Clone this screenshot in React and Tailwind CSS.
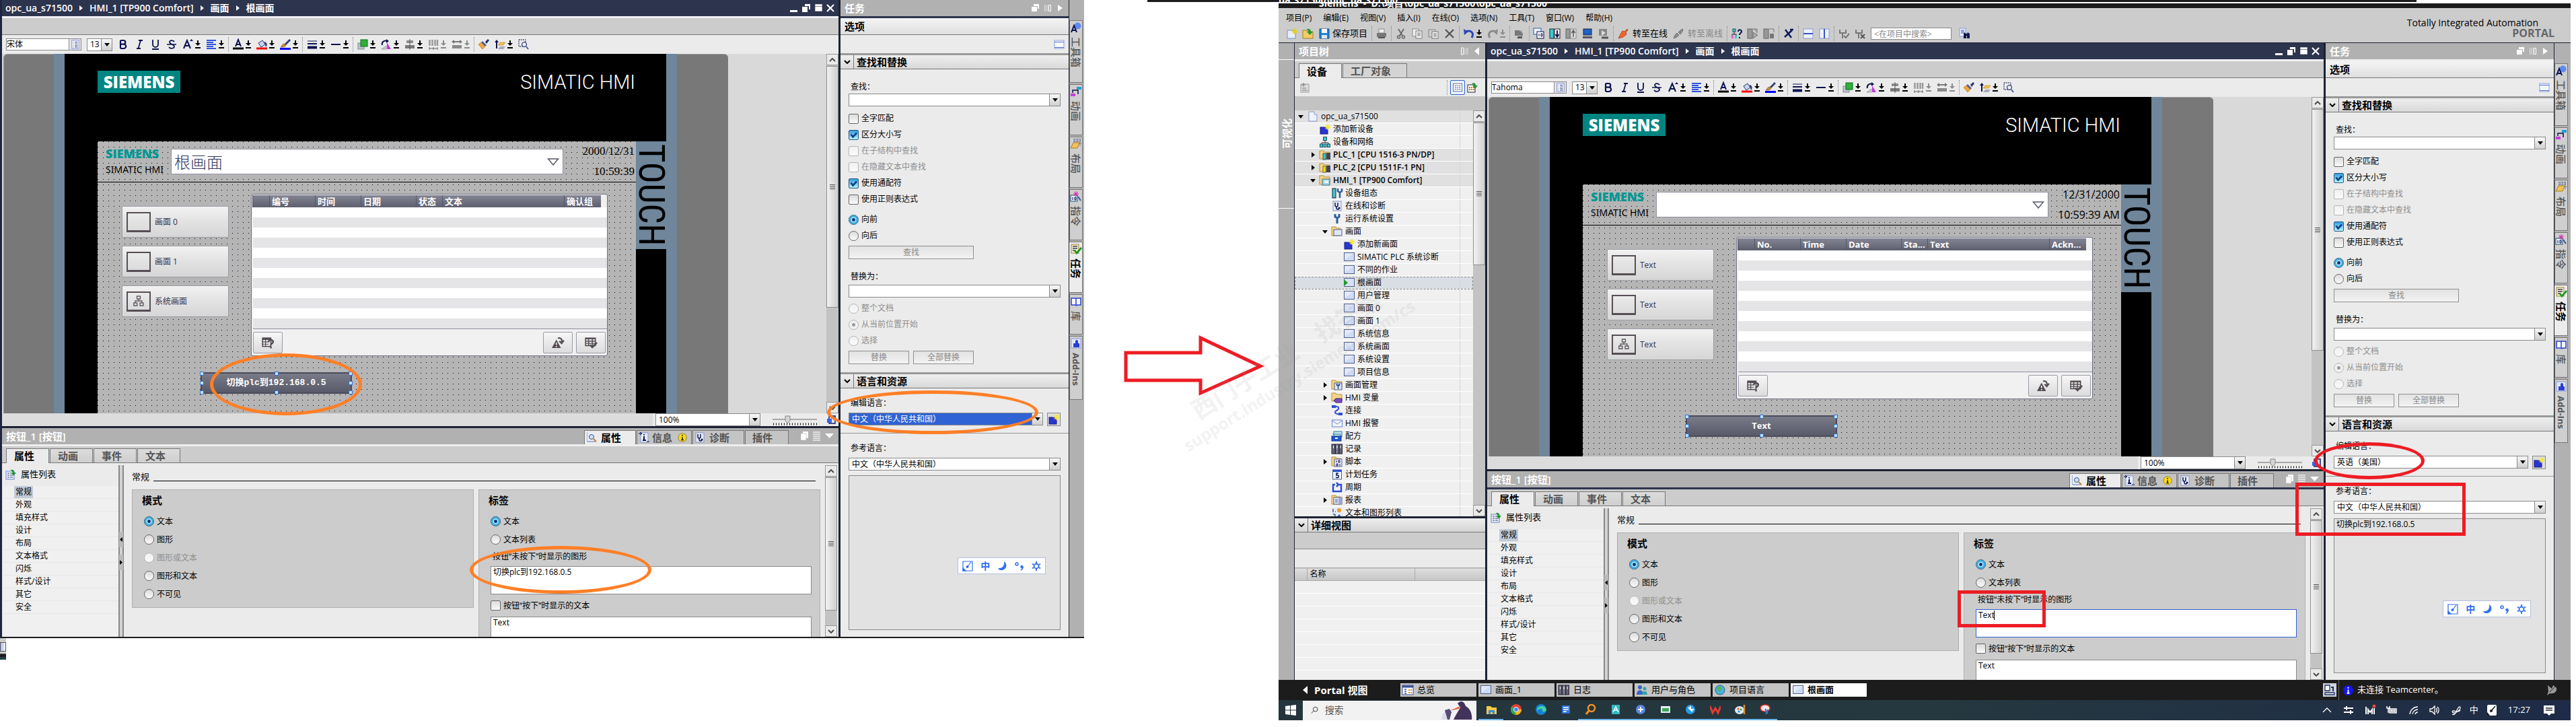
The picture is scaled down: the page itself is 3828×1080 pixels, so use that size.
import React from "react";

const ICONS = {
  list: <><rect x="2" y="1" width="12" height="14" fill="#fff" stroke="#6f7fd0" /><path d="M4 4h1M7 4h5M4 7h1M7 7h5M4 10h1M7 10h5M4 12.500h1M7 12.500h5" stroke="#10205c" /></>,
  bold: <path d="M4 2v12M4 2h4.500a2.800 2.800 0 010 5.700H4h5a3.100 3.100 0 010 6.300H4" fill="none" stroke="#0c1150" strokeWidth="2.200" />,
  italic: <path d="M7 2h6M4 14h6M10 2L6.500 14" fill="none" stroke="#0c1150" strokeWidth="1.800" />,
  under: <path d="M4 1v7a4 4 0 008 0V1M3 15h10" fill="none" stroke="#0c1150" strokeWidth="1.800" />,
  strike: <path d="M12 4c-1-2-7-3-7 .5S12 8 12 11s-6 4-8 1M1 8h14" fill="none" stroke="#0c1150" strokeWidth="1.700" />,
  fontUp: <><path d="M2 14L7 2l5 12M4 10h6" fill="none" stroke="#0c1150" strokeWidth="2" /><path d="M11 3h5l-2.500-3z" fill="#0c1150" /></>,
  align: <path d="M1 2h14M1 5h10M1 8h14M1 11h10M1 14h14" stroke="#3154dd" strokeWidth="2" />,
  fontColor: <><path d="M4 11L8 1l4 10M5 8h6" fill="none" stroke="#0c1150" strokeWidth="2" /><path d="M0 14h16" stroke="#000" strokeWidth="3" /></>,
  fill: <><path d="M3 6l6-4 4 6-6 4z" fill="#c9d4ee" stroke="#27336e" /><path d="M12 5c3 1 3 3 2 6" fill="none" stroke="#27336e" strokeWidth="2" /><path d="M0 14h16" stroke="#f00" strokeWidth="3" /></>,
  pen: <><path d="M14 0l2 2-7 7-2-2z" fill="#33406e" /><path d="M7 7l2 2c-1 3-5 3-8 3 2-1 2-5 6-5z" fill="#c58a35" stroke="#6b4717" strokeWidth=".6" /><path d="M0 14.500h16" stroke="#00f" strokeWidth="3" /></>,
  lines: <><path d="M1 3h14" stroke="#0c1150" /><path d="M1 7h14" stroke="#0c1150" strokeWidth="2" /><path d="M1 12.500h14" stroke="#0c1150" strokeWidth="4" /></>,
  line: <path d="M1 8h14" stroke="#0c1150" strokeWidth="2" />,
  green: <><rect x="1" y="6" width="9" height="9" fill="#b9c4cc" stroke="#7e8a92" /><rect x="5" y="1" width="10" height="10" fill="#2fae3c" stroke="#0f6d19" /></>,
  rotate: <><path d="M2 9a5 5 0 017-6" fill="none" stroke="#0c1150" strokeWidth="2" /><path d="M8 0l4 3-4 3z" fill="#0c1150" /><path d="M9 15V5l6 10z" fill="#c03be0" /><path d="M8 15H1l7-5z" fill="#cfd3df" stroke="#777" strokeWidth=".6" /></>,
  center: <><rect x="3" y="2" width="10" height="4" fill="#8e8e8e" /><rect x="1" y="9" width="14" height="5" fill="#7b7b7b" /><path d="M8 0v16" stroke="#555" /></>,
  distribute: <><path d="M2.500 1v9M6.500 1v9M10.500 1v9M14 1v9" stroke="#9a9a9a" strokeWidth="2.500" /><path d="M2 14h12M2 12v4M14 12v4M8 12v4" stroke="#666" /></>,
  sameWidth: <><rect x="1" y="9" width="14" height="5" fill="#8a8a8a" /><path d="M2 4h12" stroke="#777" strokeWidth="2" /><path d="M0 4l4-3v6zM16 4l-4-3v6z" fill="#777" /></>,
  brush: <><path d="M10 4l4-4 2 2-4 5z" fill="#27336e" /><path d="M6 3l6 6-2 2-6-6z" fill="#4c5ea8" /><path d="M4 5l6 6-4 4-6-7z" fill="#f0a63c" stroke="#a8680f" strokeWidth=".6" /></>,
  layer: <><path d="M3 14V3" stroke="#0c1150" strokeWidth="2" /><path d="M0 5l3-4 3 4z" fill="#0c1150" /><path d="M8 5h8l-3 4H5z" fill="#f2c15b" stroke="#b98213" strokeWidth=".6" /><path d="M8 11h8l-3 4H5z" fill="#aab" /></>,
  zoomSel: <><rect x="1" y="1" width="10" height="10" fill="none" stroke="#0c1150" strokeDasharray="2 1" /><circle cx="9" cy="8" r="3.500" fill="#e6eefb" stroke="#0c1150" /><path d="M12 11l3 4" stroke="#4a5fa8" strokeWidth="2" /></>,
  proj: <><path d="M2 1h8l4 4v10H2z" fill="#eef2fd" stroke="#8b95c6" /><path d="M10 1v4h4" fill="#fff" stroke="#8b95c6" /></>,
  add: <><rect x="1" y="5" width="11" height="10" fill="#2a36cf" stroke="#141c86" /><path d="M12 0v9M7.500 4.500h9M9 1.500l6 6M15 1.500l-6 6" stroke="#f5e83c" strokeWidth="1.500" /></>,
  net: <><path d="M8 5v4M3 12V9h10v3" fill="none" stroke="#223" /><rect x="5.500" y=".5" width="5" height="5" fill="#3bc9cd" stroke="#22505c" /><rect x=".5" y="11" width="4" height="4.500" fill="#3bc9cd" stroke="#22505c" /><rect x="6" y="11" width="4" height="4.500" fill="#3bc9cd" stroke="#22505c" /><rect x="11.500" y="11" width="4" height="4.500" fill="#3bc9cd" stroke="#22505c" /></>,
  plc: <><path d="M0 2h6l1 2h8v10H0z" fill="#f6d585" stroke="#bb9140" /><rect x="5" y="6" width="4" height="9" fill="#3bc9cd" stroke="#355" /><rect x="10" y="5" width="6" height="10" fill="#445" /></>,
  plcF: <><path d="M0 2h6l1 2h8v10H0z" fill="#f6d585" stroke="#bb9140" /><rect x="5" y="6" width="4" height="9" fill="#f5e21e" stroke="#664" /><rect x="10" y="5" width="6" height="10" fill="#445" /></>,
  hmi: <><path d="M0 1h6l1 2h8v11H0z" fill="#f6d585" stroke="#bb9140" /><rect x="4" y="6" width="11" height="9" fill="#9cd7de" stroke="#4c6d8a" /><rect x="7" y="8" width="6" height="4" fill="#eef" /></>,
  config: <><rect x="1" y="1" width="5" height="14" fill="#3bc9cd" stroke="#223" /><path d="M9 1v4l3 2 3-2V1M12 6v9" fill="none" stroke="#2f5d9a" strokeWidth="2.500" /></>,
  diag: <><rect x="2" y="1" width="12" height="14" fill="#e7edfb" stroke="#8b95c6" /><path d="M5 3v4a2 2 0 004 0V3M7 9v2a2 2 0 004 0" fill="none" stroke="#0c1150" strokeWidth="1.500" /><circle cx="11" cy="11" r="1.500" fill="#0c1150" /></>,
  wrench: <path d="M5 1v4l3 2 3-2V1M8 6v9" fill="none" stroke="#2f5d9a" strokeWidth="3" />,
  folderScr: <><path d="M0 1h6l1 2h6v11H0z" fill="#f6d585" stroke="#bb9140" /><rect x="3" y="5" width="12" height="9" fill="#dfe7f8" stroke="#50608a" /></>,
  screen: <><rect x=".5" y="1.500" width="15" height="12" fill="#cfdaf4" stroke="#50608a" /><path d="M1 2h14L1 12z" fill="#eef3fd" opacity=".6" /></>,
  start: <><rect x=".5" y="1.500" width="15" height="12" fill="#d8e1f5" stroke="#50608a" /><path d="M0 3l6 5-6 5z" fill="#1f9a2d" /></>,
  folderW: <><path d="M0 1h6l1 2h8v11H0z" fill="#f6d585" stroke="#bb9140" /><rect x="4" y="5" width="11" height="10" fill="#dfe7f8" stroke="#50608a" /><path d="M9.500 7v7M7.500 6v2.500h4V6" fill="none" stroke="#2b4b8c" strokeWidth="1.500" /></>,
  folderT: <><path d="M0 1h6l1 2h8v10H0z" fill="#f6d585" stroke="#bb9140" /><path d="M3 12l3-3h9v6H6z" fill="#7a4db8" stroke="#412179" /></>,
  conn: <><rect x="0" y="0" width="6" height="4" fill="#2d4fd2" /><rect x="10" y="11" width="6" height="4" fill="#2d4fd2" /><path d="M6 2c6 0 5 4 1 6s-2 5 3 5" fill="none" stroke="#2d4fd2" strokeWidth="2" /></>,
  mail: <><rect x=".5" y="3" width="15" height="10" fill="#f2f6ff" stroke="#6b86d6" /><path d="M1 4l7 5 7-5" fill="none" stroke="#6b86d6" /></>,
  recipe: <><path d="M3 1h12v8H3zM1 5h12v5" fill="#bfe8ee" stroke="#2f7a94" /><rect x="0" y="8" width="14" height="7" fill="#1f58d6" stroke="#0e2f85" /><path d="M5 11h4" stroke="#fff" strokeWidth="2" /></>,
  logs: <><rect x="0" y="1" width="5" height="14" fill="#667" stroke="#223" /><rect x="5.500" y="1" width="5" height="14" fill="#778" stroke="#223" /><rect x="11" y="1" width="4.500" height="14" fill="#667" stroke="#223" /><path d="M2.500 3v4M8 3v4M13 3v4" stroke="#fff" /></>,
  script: <><path d="M0 1h6l1 2h6v11H0z" fill="#f6d585" stroke="#bb9140" /><rect x="4" y="4" width="11" height="11" fill="#eef" stroke="#50608a" /><path d="M7 6v3M10 6h2v3h-2zM12 11v3M7 11h2v3H7z" stroke="#0c1150" fill="none" /></>,
  sched: <><rect x="1.500" y="1" width="13" height="14" fill="#eef3fd" stroke="#50608a" /><path d="M2 2.500h12" stroke="#2a4fd0" strokeWidth="3" /><path d="M10 6H7v3c3-1 4 1 3 3-1 1-2 1-4 0" fill="none" stroke="#0c1150" strokeWidth="1.500" /></>,
  cycle: <path d="M5 4H2v10h12V4h-4M7 1l3 3-3 3" fill="none" stroke="#2a4fd0" strokeWidth="2.500" />,
  report: <><path d="M0 1h6l1 2h6v11H0z" fill="#f6d585" stroke="#bb9140" /><rect x="3" y="4" width="12" height="10" fill="#eef" stroke="#50608a" /><path d="M5 7h4M5 9h4M5 11h4M11 5v8M13 5v8" stroke="#5060a8" /></>,
  textList: <><rect x="0" y="0" width="16" height="16" fill="#e3eafb" /><path d="M2 2v5M2 10h3v5M5 6h1" fill="none" stroke="#0c1150" /><circle cx="11" cy="4" r="3" fill="#f39a2d" /><path d="M7 15l4-5 4 5z" fill="#2a4fd0" /></>,
  new: <><rect x="1" y="3" width="12" height="12" fill="#e9effd" stroke="#7b8bc8" /><path d="M12 0v9M7.500 4.500h9M9 1.500l6 6M15 1.500l-6 6" stroke="#e6cf1d" strokeWidth="1.300" /></>,
  open: <><path d="M0 3h6l1 2h8v10H0z" fill="#f4cb65" stroke="#a87d20" /><path d="M6 1c4-1 6 1 6 4h3l-4.500 5L6 5h3" fill="#1f9a2d" /></>,
  save: <><path d="M1 1h14v14H1z" fill="#1d83d8" stroke="#0d4d8c" /><rect x="4" y="1" width="8" height="6" fill="#fff" /><rect x="4" y="10" width="8" height="5" fill="#dfe7f2" /></>,
  print: <><rect x="4" y="1" width="8" height="6" fill="#eee" stroke="#888" /><rect x="1" y="7" width="14" height="6" fill="#777" /><path d="M3 14h10" stroke="#555" strokeWidth="2" /></>,
  cut: <><path d="M4 1l6 10M12 1L6 11" stroke="#666" strokeWidth="1.800" /><circle cx="4.500" cy="13" r="2" fill="none" stroke="#666" strokeWidth="1.500" /><circle cx="11.500" cy="13" r="2" fill="none" stroke="#666" strokeWidth="1.500" /></>,
  copy: <><rect x="1" y="1" width="9" height="11" fill="#eee" stroke="#888" /><rect x="6" y="4" width="9" height="11" fill="#f5f5f5" stroke="#777" /><path d="M8 7h5M8 9h5M8 11h5" stroke="#777" /></>,
  paste: <><path d="M1 2h10v11H1z" fill="#ccc" stroke="#888" /><rect x="6" y="5" width="9" height="10" fill="#f5f5f5" stroke="#777" /><path d="M8 8h5M8 10h5M8 12h5" stroke="#777" /></>,
  del: <path d="M2 2l12 12M14 2L2 14" stroke="#555" strokeWidth="2.300" />,
  undo: <><path d="M3 5c8-3 13 2 9 9" fill="none" stroke="#2b44b8" strokeWidth="3" /><path d="M0 1l1 9 6-5z" fill="#2b44b8" /></>,
  redo: <><path d="M13 5C5 2 0 7 4 14" fill="none" stroke="#8b8b8b" strokeWidth="3" /><path d="M16 1l-1 9-6-5z" fill="#8b8b8b" /></>,
  compile: <><rect x="1" y="3" width="12" height="8" fill="#777" /><path d="M6 12h6v3H4z" fill="#555" /><path d="M12 0v8M8 4h8M9 1l6 6" stroke="#ccc" strokeWidth="1.200" /></>,
  load: <><rect x="0" y="0" width="11" height="9" fill="#eef3fd" stroke="#2f5d9a" /><rect x="5" y="5" width="10" height="10" fill="#fff" stroke="#0c1150" /><path d="M8 8v4M11 8h2v4h-2z" stroke="#0c1150" fill="none" /></>,
  down: <><rect x="0" y="1" width="6" height="14" fill="#3bc9cd" stroke="#223" /><rect x="7" y="1" width="8" height="14" fill="#f4f4f4" stroke="#223" /><path d="M11 3v9M8.500 9l2.500 4 2.500-4" stroke="#0c1150" fill="none" strokeWidth="1.800" /></>,
  up: <><rect x="0" y="1" width="6" height="14" fill="#999" stroke="#666" /><rect x="7" y="1" width="8" height="14" fill="#e4e4e4" stroke="#888" /><path d="M11 13V4M8.500 7L11 3l2.500 4" stroke="#666" fill="none" strokeWidth="1.800" /></>,
  pc: <><rect x="2" y="1" width="12" height="9" fill="#2060c8" stroke="#223" /><rect x="1" y="12" width="14" height="3" fill="#556" /></>,
  rt: <><rect x="1" y="1" width="12" height="10" fill="#888" /><path d="M5 3l6 4-6 4z" fill="#ddd" /><path d="M5 14h10" stroke="#555" strokeWidth="3" /></>,
  plug: <path d="M1 15l3-6 3-5 3 1 4-4 1 2-3 3 1 3-5 4z" fill="#f0642c" stroke="#a83a10" strokeWidth=".8" />,
  unplug: <path d="M1 15l2-5 3-3 3 3-3 3zM8 6l3-3 4-2-1 4-3 4z" fill="#8c8c8c" stroke="#666" strokeWidth=".8" />,
  help: <><path d="M4 5v4M1 12V9h6v3" fill="none" stroke="#223" /><rect x="2" y="1" width="4" height="4" fill="#3bc9cd" stroke="#22505c" /><rect x="0" y="11" width="3" height="4" fill="#f5c" /><rect x="5" y="11" width="3" height="4" fill="#3bc9cd" /><path d="M10 5c0-4 5-3 5 0 0 2-3 2-3 5M12 13v2" fill="none" stroke="#0c1150" strokeWidth="2" /></>,
  run: <><rect x="0" y="1" width="7" height="14" fill="#999" stroke="#666" /><path d="M8 1h6v6M8 6l7 4-7 5z" fill="#aaa" stroke="#777" /></>,
  stop: <><rect x="0" y="1" width="7" height="14" fill="#999" stroke="#666" /><rect x="9" y="8" width="6" height="7" fill="#777" /><path d="M8 1h7v5" fill="none" stroke="#777" /></>,
  cross: <path d="M3 2l9 12M13 3L2 13M10 2h5" stroke="#0c1b5c" strokeWidth="2.500" />,
  splitH: <><rect x="1" y="1" width="14" height="14" fill="#eef3fd" stroke="#8b9ad6" /><path d="M1 8h14" stroke="#3a55c8" strokeWidth="2" /></>,
  splitV: <><rect x="1" y="1" width="14" height="14" fill="#eef3fd" stroke="#8b9ad6" /><path d="M8 1v14" stroke="#3a55c8" strokeWidth="2" /></>,
  userOk: <><path d="M2 2v5h9V2M6 7v8" fill="none" stroke="#777" strokeWidth="2" /><path d="M8 11l3 3 5-6" fill="none" stroke="#777" strokeWidth="2" /></>,
  userNo: <><path d="M2 2v5h9V2M6 7v8" fill="none" stroke="#777" strokeWidth="2" /><path d="M9 9l6 6M15 9l-6 6" stroke="#555" strokeWidth="2" /></>,
  users: <><circle cx="5" cy="4" r="3" fill="#3a62c8" /><path d="M0 15c0-9 10-9 10 0z" fill="#3a62c8" /><circle cx="12" cy="6" r="2.500" fill="#2aa7a0" /><path d="M8 15c0-7 8-7 8 0z" fill="#2aa7a0" /></>,
  find: <><rect x="0" y="0" width="9" height="12" fill="#eef3fd" stroke="#8b9ad6" /><path d="M2 3h5M2 5h5M2 7h5" stroke="#3a55c8" /><path d="M6 15V8l2-2 1 2h2l1-2 3 2v7h-4v-4h-1v4z" fill="#10194f" /></>,
  window: <><rect x="1" y="2" width="14" height="12" fill="#f6f8ff" stroke="#8f9fdd" /><path d="M1 4.500h14M1 12.500h14" stroke="#5871d0" /></>,
  panel: <><path d="M1 3h12v12H1z" fill="#ddd" stroke="#999" /><path d="M5 1v6M2 4h6M3 9h6M3 12h8" stroke="#777" /></>,
  columns: <><rect x=".5" y="1.500" width="15" height="13" fill="#fff" stroke="#53628f" /><path d="M3 5h3M7 5h2M10 5h3M3 8h3M7 8h2M10 8h3M3 11h3M7 11h2M10 11h3" stroke="#33406e" /></>,
  export: <><rect x="0" y="4" width="11" height="11" fill="#fff" stroke="#223" /><path d="M2 8h2M5 8h2M8 8h2M2 11h2M5 11h2M8 11h2" stroke="#c72" strokeWidth="2" /><path d="M6 2c4-2 6 0 6 3h3l-4 5-4-5h3" fill="#1f9a2d" /></>,
  propList: <><rect x="0" y="3" width="12" height="12" fill="#eef3fd" stroke="#6b7fd0" /><path d="M2 6h3M6 6h4M2 9h3M6 9h4M2 12h3M6 12h4" stroke="#33406e" /><path d="M7 1c4-1 5 1 5 4h3l-4 5-3-5h2" fill="#1f9a2d" /></>,
  propTab: <><path d="M2 0v14h13" fill="none" stroke="#5f78cf" /><rect x="2" y="0" width="10" height="13" fill="#e7edfb" /><circle cx="8" cy="7" r="3.500" fill="#cfe0fa" stroke="#45506e" /><path d="M11 10l4 4" stroke="#c78324" strokeWidth="2" /></>,
  infoTab: <><rect x="3" y="1" width="11" height="14" fill="#e7edfb" stroke="#8b9ad6" /><path d="M8 6v6M6 12h5M8 3v1.500" stroke="#0c1150" strokeWidth="2" /><path d="M0 2h4M2 0l3 2-3 2M12 14h4" stroke="#0c1150" fill="none" /></>,
  info: <><circle cx="8" cy="8" r="7" fill="#fbd91a" stroke="#8f7a0b" /><path d="M8 7v5M6 12h4M8 3.500v2" stroke="#222" strokeWidth="1.800" /></>,
  infoBlue: <><circle cx="8" cy="8" r="8" fill="#1515ee" /><path d="M8 7v5.500M6 12.500h4M8 3v2" stroke="#fff" strokeWidth="2" /></>,
  tools: <><circle cx="10.500" cy="5.500" r="5" fill="#5d8af0" /><path d="M1 15L5 5l4 10M2.500 12h5" fill="none" stroke="#0c1150" strokeWidth="2" /></>,
  anim: <><rect x="0" y="11" width="7" height="4" fill="#c83be0" /><rect x="9" y="1" width="7" height="4" fill="#239dd0" /><path d="M3 10V6h8v6" fill="none" stroke="#0c1150" strokeWidth="1.500" /></>,
  layout: <><path d="M4 1h12M4 4h12M9 7h7M6 0v5M10 0v8M14 0v12" stroke="#33406e" strokeDasharray="1 1" /><path d="M4 6h9l-3 8H0z" fill="#f2c15b" stroke="#a87d20" /></>,
  instr: <><rect x="0" y="6" width="10" height="9" fill="#e7edfb" stroke="#22506c" /><path d="M3 9v4M6 9h2v4H6z" stroke="#0c1150" fill="none" /><path d="M8 0v8M4 4h8M5 1l6 6M11 1L5 7" stroke="#d21fae" /><path d="M11 8l4 6" stroke="#2f5d9a" strokeWidth="2" /></>,
  task: <><rect x="1" y="1" width="11" height="13" fill="#f7ecc2" stroke="#9a8431" /><path d="M3 4h7M3 7h7M3 10h4" stroke="#33406e" strokeWidth="1.500" /><path d="M6 10l3 4 7-8" fill="none" stroke="#1f9a2d" strokeWidth="2.800" /></>,
  lib: <path d="M8 3v11M8 3H1v10h7l1 1 1-1h5V3z" fill="#f6f8ff" stroke="#2a3fd0" strokeWidth="1.500" />,
  addin: <><rect x="1" y="1" width="14" height="14" fill="#dfe7fa" stroke="#8b9ad6" /><path d="M4 8h3V5a2 2 0 114 0v3h2v6H4z" fill="#2a3fd0" /></>,
  overview: <><rect x="0" y="1" width="16" height="14" fill="#fff" stroke="#334c90" /><path d="M0 3h16" stroke="#334c90" strokeWidth="3" /><path d="M3 7h3M3 10h3M3 13h3" stroke="#334c90" strokeWidth="1.500" /><path d="M9 8h2M12 8h2M9 12h2M12 12h2" stroke="#d9861f" strokeWidth="2" /></>,
  globe: <><circle cx="8" cy="8" r="7" fill="#4cb2d8" stroke="#1f5f96" /><path d="M3 5l5-3 3 4-4 5z" fill="#57b357" /></>,
  sysGray: <path d="M8 5v3M3 11V8h10v3M5.500 1h5v4h-5zM.8 11h5v4h-5zM10 11h5v4h-5z" fill="none" stroke="#605a60" strokeWidth="1.300" />,
  tblQ: <><rect x="1" y="2" width="11" height="11" fill="none" stroke="#544d53" strokeWidth="1.400" /><path d="M1 3h11" stroke="#544d53" strokeWidth="3" /><path d="M1 7h9M1 10h8M5 4v9" stroke="#544d53" /><path d="M9 7c0-4 6-3 6 0 0 2-3 2-3 4M12 13v2.500" fill="none" stroke="#544d53" strokeWidth="2.200" /></>,
  warn: <><path d="M6 4l6 11H0z" fill="#544d53" /><path d="M6 8v3M6 12.500V14" stroke="#eee" strokeWidth="1.500" /><path d="M8 2c4-1 6 2 5 5M10 6l3 3 3-4" fill="none" stroke="#544d53" strokeWidth="2" /></>,
  tblOk: <><rect x="1" y="2" width="13" height="10" fill="none" stroke="#544d53" strokeWidth="1.400" /><path d="M1 3h13M1 6h13M1 9h12M5 2v10M10 2v10" stroke="#544d53" strokeWidth="1.300" /><path d="M7 11l3 3 6-6" fill="none" stroke="#544d53" strokeWidth="2.500" /></>,
};

function Ic({ n, c = "size-4" }) {
  return <svg viewBox="0 0 16 16" aria-hidden="true" className={"shrink-0 overflow-visible " + c}>{ICONS[n]}</svg>;
}

function Drop({ gray }) {
  const col = gray ? "#8b8b8b" : "#000";
  return (
    <svg viewBox="0 0 8 12" aria-hidden="true" className="h-3 w-2 shrink-0">
      <path d="M4 0v4M0 11h8" stroke={col} strokeWidth="2" />
      <path d="M0 4h8L4 8z" fill={col} />
    </svg>
  );
}

function Tool({ n, drop, gray }) {
  return (
    <button type="button" aria-label={n} className="flex shrink-0 items-center gap-[3px]">
      <Ic n={n} />
      {drop && <Drop gray={gray} />}
    </button>
  );
}

const Sep = () => <span className="-mx-0.5 h-[22px] w-px shrink-0 border-l border-dotted border-[#888]" />;

function Combo({ label, value, className, selected }) {
  return (
    <span className={"relative flex h-[19px] border border-[#8a8a8a] bg-white " + className}>
      <select
        aria-label={label}
        defaultValue={value}
        className={"w-full appearance-none px-1 text-xs leading-4 outline-none " + (selected ? "bg-[#3063d4] text-white" : "bg-white text-black")}
      >
        <option>{value}</option>
      </select>
      <span className="pointer-events-none absolute inset-y-0 right-0 flex w-4 items-center justify-center border-l border-[#8a8a8a] bg-gradient-to-b from-[#f8f8f8] to-[#cfcfcf]">
        <svg viewBox="0 0 8 5" aria-hidden="true" className="h-[5px] w-2"><path d="M0 0h8L4 5z" /></svg>
      </span>
    </span>
  );
}

function Tick({ type = "checkbox", name, label, checked, disabled, h = "h-6" }) {
  const base = "size-[15px] shrink-0 appearance-none border bg-gradient-to-b from-[#dcdcdc] to-[#fafafa] disabled:border-[#b5b5b5] disabled:from-[#f1f1f1] ";
  const look = type === "radio"
    ? "rounded-full border-[#666] enabled:checked:border-[#2c5a7c] enabled:checked:bg-[radial-gradient(circle,#083a7c_0_2px,#cdeefb_3px,#2fa5dd_5px,#5fd6f5_7px)] disabled:checked:bg-[radial-gradient(circle,#999_0_2px,#f1f1f1_3px)]"
    : "rounded-[2px] border-[#666] checked:border-[#2c5a7c] checked:from-[#2f9be0] checked:to-[#b5f2fb]";
  return (
    <label className={"flex items-center gap-1 text-xs " + h + " " + (disabled ? "text-[#8f8f8f]" : "text-black")}>
      <span className="relative flex">
        <input type={type} name={name} defaultChecked={checked} disabled={disabled} className={base + look} />
        {type === "checkbox" && checked && (
          <svg viewBox="0 0 15 15" aria-hidden="true" className="pointer-events-none absolute inset-0 size-[15px]">
            <path d="M3.500 6.500l3 4 5.500-6" fill="none" stroke="#0c3f86" strokeWidth="2.600" />
          </svg>
        )}
      </span>
      {label}
    </label>
  );
}

function ScrollBtn({ dir }) {
  return (
    <button type="button" aria-label={dir} className="flex h-[17px] shrink-0 items-center justify-center border border-[#999] bg-[#e9e9e9]">
      <svg viewBox="0 0 10 6" className="h-1.5 w-2.5"><path d={dir === "up" ? "M1 5l4-4 4 4" : "M1 1l4 4 4-4"} fill="none" stroke="#4a4a4a" strokeWidth="2" /></svg>
    </button>
  );
}

function Scroll({ thumb, className = "" }) {
  return (
    <div className={"flex w-[18px] shrink-0 flex-col bg-[#c3c3c3] " + className}>
      <ScrollBtn dir="up" />
      <div className={"my-px flex items-center justify-center border border-[#8d8d8d] bg-gradient-to-r from-[#f2f2f2] to-[#cfcfcf] " + thumb}>
        <svg viewBox="0 0 8 8" className="size-2"><path d="M0 .5h8M0 3h8M0 5.500h8M0 8h8" stroke="#555" /></svg>
      </div>
      <div className="flex-1" />
      <ScrollBtn dir="down" />
    </div>
  );
}

const Crumb = () => <svg viewBox="0 0 5 8" aria-hidden="true" className="h-2 w-[5px]"><path d="M0 0l5 4-5 4z" fill="#fff" /></svg>;

function EditorTitle() {
  return (
    <div className="flex h-6 items-center gap-2.5 bg-[#2d344d] pr-1.5 pl-[5px] text-sm font-semibold text-white">
      <span>opc_ua_s71500</span><Crumb /><span>HMI_1 [TP900 Comfort]</span><Crumb /><span className="font-bold">画面</span><Crumb /><span className="font-bold">根画面</span>
      <svg viewBox="0 0 66 12" aria-label="window controls" className="ml-auto h-3 w-[66px]">
        <path d="M0 10.500h11" stroke="#fff" strokeWidth="3" />
        <path d="M22 0h8v8h-2V3h-6zM18 4h8v8h-8z" fill="#fff" />
        <path d="M37 0h11v11H37zM37 3.500h11" fill="#fff" stroke="#2d344d" strokeWidth=".6" />
        <path d="M55 1l10 10M65 1L55 11" stroke="#fff" strokeWidth="2.200" />
      </svg>
    </div>
  );
}

function EditorToolbar({ font }) {
  return (
    <div className="flex h-7 items-center gap-2 bg-[#ebebeb] pl-1.5">
      <span className="flex h-[18px] w-28 shrink-0 border border-[#8a8a8a] bg-white">
        <input aria-label="font" defaultValue={font} className="w-full min-w-0 text-xs outline-none" />
        <span className="flex w-[18px] shrink-0 items-center justify-center border-l border-[#8a8a8a] bg-[#e4e4ee]"><Ic n="list" c="size-3.5" /></span>
      </span>
      <Combo label="font size" value="13" className="w-[38px] shrink-0" />
      <span className="flex shrink-0 items-center gap-2"><Tool n="bold" /><Tool n="italic" /><Tool n="under" /><Tool n="strike" /></span>
      <Tool n="fontUp" drop /><Tool n="align" drop /><Sep />
      <Tool n="fontColor" drop /><Tool n="fill" drop /><Tool n="pen" drop /><Sep />
      <Tool n="lines" drop /><Tool n="line" drop /><Sep />
      <Tool n="green" drop /><Tool n="rotate" drop /><Tool n="center" drop /><Tool n="distribute" drop gray /><Tool n="sameWidth" drop gray /><Sep />
      <Tool n="brush" /><Tool n="layer" drop /><Tool n="zoomSel" />
    </div>
  );
}

const COLS = ["w-[25px]", "w-[68px]", "w-[68px]", "w-[82px]", "w-[39px]", "w-[181px]", "w-[54px]", "w-[9px]"];

function AlarmTable({ heads }) {
  return (
    <div className="absolute top-[78px] left-[228px] w-[530px] rounded-[3px] border border-[#6f7286] bg-[#f1f1f1] p-px">
      <table className="w-[526px] table-fixed border-collapse border-b border-[#8d8f9d]">
        <colgroup>{COLS.map((c, i) => <col key={i} className={c} />)}</colgroup>
        <thead>
          <tr className="h-[18px]">
            {["", ...heads].map((h, i) => (
              <th key={i} className="overflow-hidden border-l border-[#565768] bg-gradient-to-b from-[#858694] to-[#5e5f6e] p-0 pl-[3px] text-left text-[13px] leading-4 font-bold whitespace-nowrap text-white">{h}</th>
            ))}
            <th className="p-0" />
          </tr>
        </thead>
        <tbody>
          {Array.from({ length: 12 }, (_, i) => (
            <tr key={i} className="h-[15px] odd:bg-white even:bg-[#e5e5e7]"><td colSpan={8} className="p-0" /></tr>
          ))}
        </tbody>
      </table>
      <div className="flex gap-[5px] px-px pt-1 pb-0.5">
        {["tblQ", "warn", "tblOk"].map((n) => (
          <button key={n} type="button" aria-label={n} className="flex h-8 w-11 items-center justify-center rounded-[2px] border border-[#9a9aa6] bg-gradient-to-b from-[#f6f6f6] to-[#dcdcde] first:mr-auto"><Ic n={n} c="size-[18px]" /></button>
        ))}
      </div>
    </div>
  );
}

const HANDLES = ["top-0 left-0", "top-0 left-1/2", "top-0 left-full", "top-1/2 left-0", "top-1/2 left-full", "top-full left-0", "top-full left-1/2", "top-full left-full"];

function HmiScreen({ t }) {
  return (
    <div className="flex h-[534px] overflow-hidden bg-[#d9d9d9]">
      <div className="ml-0.5 w-[75px] shrink-0 rounded-tl-md border-t border-l border-[#999] bg-[#787878]" />
      <div className="w-4 shrink-0 bg-[#6f869b]" />
      <div className="w-[49px] shrink-0 bg-black" />
      <div className="w-[800px] shrink-0">
        <div className="flex h-[130px] items-start justify-between bg-black pt-[25px] pr-px">
          <div className="flex h-[33px] w-[123px] items-center justify-center bg-[#008582] font-['Open_Sans'] text-2xl leading-8 font-extrabold text-white">SIEMENS</div>
          <div className="font-['Roboto','Liberation_Sans'] text-[29px] leading-[34px] font-light text-white">SIMATIC HMI</div>
        </div>
        <div className="relative h-[404px] bg-[#b5b5b5] bg-[radial-gradient(circle_at_0.5px_0.5px,#000_0.6px,transparent_0.7px)] bg-size-[8px_8px]">
          <div className="flex h-[61px] items-center justify-between border-b border-black pr-0.5 pl-3">
            <div className="w-[97px]">
              <div className="font-['Open_Sans'] text-lg leading-6 font-extrabold text-[#009894]">SIEMENS</div>
              <div className="font-['Noto_Sans'] text-sm leading-6 text-black">SIMATIC HMI</div>
            </div>
            <div className="mr-auto flex h-[38px] w-[583px] items-center justify-between border border-[#9092a0] bg-white pr-[5px] pl-1 font-['Noto_Sans_CJK_SC'] text-2xl font-light text-[#31345a]">
              <span>{t.title}</span>
              <svg viewBox="0 0 18 11" aria-hidden="true" className="h-[11px] w-[18px]"><path d="M1.500 1h15L9 10z" fill="none" stroke="#555767" strokeWidth="1.500" /></svg>
            </div>
            <div className={"text-right whitespace-nowrap text-black " + t.clock}><div>{t.date}</div><div>{t.time}</div></div>
          </div>
          <div className="absolute top-24 left-9 flex w-[159px] flex-col gap-3">
            {t.buttons.map((b, i) => (
              <button key={i} type="button" className="flex h-[47px] items-center gap-1.5 rounded-[2px] border border-[#9c9ca8] bg-gradient-to-b from-[#f2f2f2] via-[#e2e2e2] to-[#d6d6d6] pl-1.5 text-xs text-[#31334e]">
                <span className="flex h-[30px] w-9 items-center justify-center border-2 border-b-[3px] border-[#564e54]">{i === 2 && <Ic n="sysGray" />}</span>
                {b}
              </button>
            ))}
          </div>
          <AlarmTable heads={t.heads} />
          <div className="absolute top-[343px] left-[153px] flex h-8 w-[225px] items-center justify-center border-2 border-[#4a4b5a] bg-gradient-to-b from-[#7a7b89] to-[#595a69] text-[13px] font-bold text-white">
            <span className={t.btnFont}>{t.btn}</span>
            <div className="absolute inset-0">
              {HANDLES.map((h) => <i key={h} className={"absolute size-1.5 -translate-x-1/2 -translate-y-1/2 border border-[#3f6fd0] bg-[#b9e3fb] " + h} />)}
            </div>
          </div>
        </div>
      </div>
      <div className="w-[45px] shrink-0 bg-black pt-[130px]">
        <div className="flex h-40 items-center justify-center bg-[#6f869b] font-['Liberation_Sans_Narrow','Roboto_Condensed','Liberation_Sans'] text-[53px] leading-[45px] text-black [writing-mode:vertical-rl] [text-orientation:sideways]">TOUCH</div>
      </div>
      <div className="w-4 shrink-0 bg-[#6f869b]" />
      <div className="w-[76px] shrink-0 rounded-tr-md border-t border-[#999] bg-[#787878]" />
      <div className="flex-1" />
      <Scroll thumb="h-[359px]" />
    </div>
  );
}

function StatusStrip() {
  return (
    <div className="flex h-[19px] items-center justify-end bg-[#dcdcdc]">
      <div className="flex h-full w-[276px] items-center bg-[#ebebeb] pl-1">
        <Combo label="zoom" value="100%" className="w-[156px]" />
        <svg viewBox="0 0 66 16" aria-hidden="true" className="ml-[18px] h-4 w-[66px]">
          <path d="M0 7h66" stroke="#666" />
          <path d="M1 14h65" stroke="#111" strokeWidth="3" strokeDasharray="1 3" />
          <path d="M19 2h7v7l-3.500 4L19 9z" fill="#d5d5d5" stroke="#888" />
        </svg>
        <svg viewBox="0 0 14 14" aria-hidden="true" className="mr-1 ml-auto size-3.5"><path d="M4 1h9v11H4z" fill="#dfe6fb" stroke="#10206c" strokeWidth="1.500" /><path d="M1 5h7v6H1z" fill="#3a62e8" /></svg>
      </div>
    </div>
  );
}

const PROP_ITEMS = ["常规", "外观", "填充样式", "设计", "布局", "文本格式", "闪烁", "样式/设计", "其它", "安全"];

function PropsPanel({ id, text, caret }) {
  const tab = "flex h-[21px] items-center border border-b-0 border-[#777] text-[15px] font-bold ";
  return (
    <div>
      <div className="flex h-6 items-end bg-[#b1b1b1] pl-1.5 text-[15px] font-semibold text-white">
        <span className="self-center">按钮_1 [按钮]</span>
        <div className="ml-auto flex gap-px">
          <button type="button" className={tab + "w-[77px] gap-1.5 bg-[#ececec] pl-0.5 text-black"}><Ic n="propTab" />属性</button>
          <button type="button" className={tab + "w-[82px] gap-1 bg-[#c4c4c4] pl-0.5 text-[#555]"}><Ic n="infoTab" />信息<Ic n="info" c="ml-1 size-3.5" /></button>
          <button type="button" className={tab + "w-[77px] gap-1.5 bg-[#c4c4c4] pl-0.5 text-[#555]"}><Ic n="diag" />诊断</button>
          <button type="button" className={tab + "w-[65px] bg-[#c4c4c4] pl-2.5 text-[#555]"}>插件</button>
        </div>
        <svg viewBox="0 0 52 14" aria-hidden="true" className="mr-1 ml-[18px] h-3.5 w-[52px] self-center">
          <path d="M3 0h8v10H3z" fill="#fff" /><path d="M0 3h8v10H0z" fill="#fff" stroke="#b1b1b1" strokeWidth=".6" />
          <path d="M18 1h11M18 4h11M18 7h11M18 10h11M18 13h11" stroke="#eee" strokeWidth="1.500" />
          <path d="M36 3h13l-6.500 7z" fill="#fff" />
        </svg>
      </div>
      <div className={"h-[3px] " + (caret ? "bg-[#2d344d]" : "bg-[#eee]")} />
      <div className="flex h-[25px] items-end gap-px border-b border-[#777] bg-[#ccc] pl-1.5">
        {["属性", "动画", "事件", "文本"].map((n, i) => (
          <button key={n} type="button" className={tab + "w-16 pl-[11px] " + (i === 0 ? "-mb-px h-[22px] bg-[#ececec] text-black" : "bg-gradient-to-b from-[#dcdcdc] to-[#cfcfcf] text-[#555]")}>{n}</button>
        ))}
      </div>
      <div className="flex h-[258px] overflow-hidden bg-[#ebebeb] text-xs text-black">
        <div className="ml-0.5 w-[171px] shrink-0">
          <div className="flex h-[34px] items-center gap-1.5 pl-1 text-[13px]"><Ic n="propList" />属性列表</div>
          <ul className="h-full bg-[#f0f0f0]">
            {PROP_ITEMS.map((n, i) => (
              <li key={n} className="flex h-[19px] items-center border-b border-[#e6e6e6] pl-4"><a href="#" className={"px-0.5 leading-[18px] " + (i === 0 ? "bg-[#c0cbd9]" : "")}>{n}</a></li>
            ))}
          </ul>
        </div>
        <div className="mt-[3px] flex w-2 shrink-0 flex-col items-center justify-center gap-[11px] border-x-2 border-[#888] bg-[#d2d2d2]">
          <svg viewBox="0 0 6 23" className="h-[23px] w-1.5"><path d="M0 0h6v23H0z" fill="#bbb" /><path d="M5 8v7L1 11.500z" /></svg>
          <svg viewBox="0 0 6 23" className="h-[23px] w-1.5"><path d="M0 0h6v23H0z" fill="#bbb" /><path d="M1 8v7l4-3.500z" /></svg>
        </div>
        <div className="min-w-0 flex-1 pt-3 pl-3">
          <div className="flex h-[17px] items-end gap-1.5 pr-[14px] text-[13px] leading-[18px]">常规<span className="mb-0.5 h-px flex-1 bg-black" /></div>
          <div className="mt-[10px] grid grid-cols-2 items-start gap-[7px] pr-[7px]">
            <fieldset className="h-[176px] min-w-0 border border-[#b0b0b0] bg-[#ccc] pl-[17px]">
              <div className="-ml-[3px] flex h-[33px] items-center pb-1 text-[15px] font-bold">模式</div>
              {["文本", "图形", "图形或文本", "图形和文本", "不可见"].map((n, i) => (
                <Tick key={n} type="radio" name={id + "-mode"} label={n} checked={i === 0} disabled={i === 2} h="h-[27px]" />
              ))}
            </fieldset>
            <fieldset className="h-[260px] min-w-0 border border-[#b0b0b0] bg-[#ccc] pr-3 pl-[17px]">
              <div className="-ml-[3px] flex h-[33px] items-center pb-1 text-[15px] font-bold">标签</div>
              <Tick type="radio" name={id + "-label"} label="文本" checked h="h-[27px]" />
              <Tick type="radio" name={id + "-label"} label="文本列表" h="h-[27px]" />
              <label htmlFor={id + "-off"} className="block h-[26px] pl-[3px] leading-6">按钮“未按下”时显示的图形</label>
              <div className="relative flex">
                <textarea id={id + "-off"} defaultValue={text} className={"h-[42px] w-full resize-none border bg-white px-[3px] text-xs leading-4 outline-none " + (caret ? "border-[#3063d4]" : "border-[#8a8a8a]")} />
                {caret && <span className="absolute top-0.5 left-[27px] h-3.5 w-px bg-black" />}
              </div>
              <Tick label="按钮“按下”时显示的文本" h="h-[33px]" />
              <textarea aria-label="text when pressed" defaultValue="Text" className="block h-[42px] w-full resize-none border border-[#8a8a8a] bg-white px-[3px] text-xs leading-4 outline-none" />
            </fieldset>
          </div>
        </div>
        <Scroll thumb="h-[198px]" className="mt-[3px] mr-0.5" />
      </div>
    </div>
  );
}

function Editor({ t, id }) {
  return (
    <section className="min-w-0 flex-1">
      <EditorTitle />
      <div className="h-[3px] bg-[#f0f0f4]" />
      <div className="h-[25px] border-b border-[#777] bg-[#ccc]" />
      <EditorToolbar font={t.font} />
      <HmiScreen t={t} />
      <StatusStrip />
      <div className="h-[3px] bg-[#1d2232]" />
      <PropsPanel id={id} text={t.btn} caret={t.caret} />
    </section>
  );
}

function SectionHead({ children }) {
  return (
    <div className="flex h-6 items-stretch border-t-[3px] border-b border-t-[#999] border-b-[#777] bg-gradient-to-b from-[#eee] to-[#d9d9d9] text-[15px] leading-5 font-bold text-black">
      <span className="mr-1 flex w-5 items-center justify-center border-r border-[#777]">
        <svg viewBox="0 0 10 6" aria-hidden="true" className="h-1.5 w-2.5"><path d="M1 1l4 4 4-4" fill="none" stroke="#000" strokeWidth="2" /></svg>
      </span>
      {children}
    </div>
  );
}

function PushBtn({ children, w }) {
  return <button type="button" disabled className={"h-5 border border-[#8f8f8f] bg-gradient-to-b from-[#e2e2e2] to-[#f3f3f3] text-xs text-[#8a8a8a] " + w}>{children}</button>;
}

function ImeBar() {
  return (
    <div className="absolute right-[34px] bottom-[93px] flex h-[25px] w-[131px] items-center justify-between border border-[#b4bfdc] bg-white px-1.5 text-sm font-bold text-[#2d6ff0]">
      <svg viewBox="0 0 16 16" className="size-4"><path d="M1 1h14v14H1z" fill="#fff" stroke="#2d6ff0" strokeWidth="1.200" /><path d="M1 11l4 4H1zM7 10l6-8" fill="#2d6ff0" stroke="#2d6ff0" strokeWidth="1.200" /><circle cx="7.500" cy="9" r="2" fill="#2d6ff0" /></svg>
      <span>中</span>
      <svg viewBox="0 0 14 14" className="size-3.5"><path d="M9 0c7 5 2 14-5 13-2 0-3-1-4-3 7 1 10-4 9-10z" fill="#2d6ff0" /></svg>
      <svg viewBox="0 0 14 14" className="size-3.5"><circle cx="3" cy="4" r="2" fill="none" stroke="#2d6ff0" strokeWidth="1.500" /><circle cx="10.500" cy="8" r="2.200" fill="#2d6ff0" /><path d="M12 8c0 2-1 4-3 5" fill="none" stroke="#2d6ff0" strokeWidth="1.600" /></svg>
      <svg viewBox="0 0 14 14" className="size-3.5"><circle cx="7" cy="7" r="3.500" fill="none" stroke="#2d6ff0" strokeWidth="1.800" /><path d="M7 0v3M7 11v3M1 3.500l2 1.500M11 9l2 1.500M13 3.500L11 5M3 9l-2 1.500" stroke="#2d6ff0" strokeWidth="1.800" /></svg>
    </div>
  );
}

function TaskPanel({ id, lang, selected, refText }) {
  return (
    <aside className="relative w-[339px] shrink-0 bg-[#ebebeb] text-xs text-black">
      <div className="flex h-6 items-center justify-between bg-[#b1b1b1] pr-2 pl-1.5 text-[15px] font-semibold text-white">
        任务
        <svg viewBox="0 0 48 12" aria-hidden="true" className="h-3 w-12">
          <path d="M4 0h8v7h-2V3H4z" fill="#fff" /><path d="M1 4h8v7H1z" fill="#fff" />
          <path d="M20.500 1v10M22.500 1v10M25 1v10" stroke="#ddd" /><path d="M26.500 1.500h3v9h-3z" fill="none" stroke="#fff" />
          <path d="M40 1l7 5-7 5z" fill="#fff" />
        </svg>
      </div>
      <div className={"h-[3px] " + (selected ? "bg-[#2d344d]" : "bg-[#eee]")} />
      <div className="flex h-[25px] items-center border-b border-[#777] bg-gradient-to-b from-[#f4f4f4] to-[#dfdfdf] pl-1.5 text-[15px] font-bold">选项</div>
      <div className="flex h-[27px] items-center justify-end pr-1.5"><Ic n="window" /></div>
      <SectionHead>查找和替换</SectionHead>
      <div className="px-3 pt-[17px] pb-3">
        <div className="h-[19px] pl-[3px] leading-[18px]">查找：</div>
        <Combo label="查找" value="" className="w-full" />
        <div className="mt-1.5">
          <Tick label="全字匹配" /><Tick label="区分大小写" checked /><Tick label="在子结构中查找" disabled />
          <Tick label="在隐藏文本中查找" disabled /><Tick label="使用通配符" checked /><Tick label="使用正则表达式" />
        </div>
        <div className="mt-1.5">
          <Tick type="radio" name={id + "-dir"} label="向前" checked /><Tick type="radio" name={id + "-dir"} label="向后" />
        </div>
        <div className="mt-[3px] flex"><PushBtn w="w-[186px]">查找</PushBtn></div>
        <div className="mt-[17px] h-[21px] pl-[3px] leading-[18px]">替换为：</div>
        <Combo label="替换为" value="" className="w-full" />
        <div className="mt-1">
          <Tick type="radio" name={id + "-scope"} label="整个文档" disabled /><Tick type="radio" name={id + "-scope"} label="从当前位置开始" checked disabled /><Tick type="radio" name={id + "-scope"} label="选择" disabled />
        </div>
        <div className="mt-[3px] flex gap-1.5"><PushBtn w="w-[90px]">替换</PushBtn><PushBtn w="w-[90px]">全部替换</PushBtn></div>
      </div>
      <SectionHead>语言和资源</SectionHead>
      <div className="px-3 pt-[13px]">
        <div className="h-[23px] pl-[3px] leading-[18px]">编辑语言：</div>
        <div className="flex gap-1.5">
          <Combo label="编辑语言" value={lang} className="flex-1" selected={selected} />
          <button type="button" aria-label="language resources" className="flex size-5 items-center justify-center border border-[#888] bg-[#ddd]"><Ic n="add" /></button>
        </div>
      </div>
      <div className="mt-2.5 h-px bg-[#999]" />
      <div className="px-3 pt-[13px]">
        <div className="h-[23px] pl-[3px] leading-[18px]">参考语言：</div>
        <Combo label="参考语言" value="中文（中华人民共和国）" className="w-full" />
        <textarea aria-label="reference text" readOnly defaultValue={refText} className="mt-[7px] block h-[230px] w-full resize-none border border-[#8a8a8a] bg-[#e2e2e2] px-[3px] text-xs leading-4 outline-none" />
      </div>
      <ImeBar />
    </aside>
  );
}

const SIDE = [
  ["tools", "工具箱", "h-[93px]"], ["anim", "动画", "h-[76px]"], ["layout", "布局", "h-[76px]"], ["instr", "指令", "h-[76px]"],
  ["task", "任务", "h-[76px]"], ["lib", "库", "h-[60px]"], ["addin", "Add-Ins", "h-[95px]"],
];

function SideTabs({ w }) {
  return (
    <nav className={"flex shrink-0 flex-col gap-0.5 border-l border-[#1d2232] bg-[#b1b1b1] pt-[30px] " + w}>
      {SIDE.map(([ic, n, h]) => (
        <button key={n} type="button" className={"flex w-5 flex-col items-center gap-1.5 border border-[#777] pt-0.5 " + h + " " + (n === "任务" ? "border-l-0 bg-[#ececec] text-[15px] font-bold text-black" : "bg-[#cfcfcf] text-[#555] " + (n === "Add-Ins" ? "text-[13px] font-bold" : "text-[15px] font-medium"))}>
          <Ic n={ic} />
          <span className="leading-4 [text-orientation:sideways] [writing-mode:vertical-rl]">{n}</span>
        </button>
      ))}
    </nav>
  );
}

const ZH = {
  font: "宋体", title: "根画面", date: "2000/12/31", time: "10:59:39", clock: "font-['Liberation_Serif'] text-[17px] leading-[30px]",
  buttons: ["画面 0", "画面 1", "系统画面"], heads: ["编号", "时间", "日期", "状态", "文本", "确认组"],
  btn: "切换plc到192.168.0.5", btnFont: "font-['Liberation_Mono','Noto_Sans_CJK_SC']",
};
const EN = {
  font: "Tahoma", title: "", date: "12/31/2000", time: "10:59:39 AM", clock: "font-['Open_Sans'] text-base leading-[30px]",
  buttons: ["Text", "Text", "Text"], heads: ["No.", "Time", "Date", "Sta...", "Text", "Ackn..."],
  btn: "Text", btnFont: "", caret: true,
};

const TREE = [
  [0, "d", "proj", "opc_ua_s71500", 1], [1, "", "add", "添加新设备"], [1, "", "net", "设备和网络"],
  [1, "r", "plc", "PLC_1 [CPU 1516-3 PN/DP]", 2], [1, "r", "plcF", "PLC_2 [CPU 1511F-1 PN]", 2], [1, "d", "hmi", "HMI_1 [TP900 Comfort]", 2],
  [2, "", "config", "设备组态"], [2, "", "diag", "在线和诊断"], [2, "", "wrench", "运行系统设置"], [2, "d", "folderScr", "画面"],
  [3, "", "add", "添加新画面"], [3, "", "screen", "SIMATIC PLC 系统诊断"], [3, "", "screen", "不同的作业"], [3, "", "start", "根画面", 3],
  [3, "", "screen", "用户管理"], [3, "", "screen", "画面 0"], [3, "", "screen", "画面 1"], [3, "", "screen", "系统信息"],
  [3, "", "screen", "系统画面"], [3, "", "screen", "系统设置"], [3, "", "screen", "项目信息"], [2, "r", "folderW", "画面管理"],
  [2, "r", "folderT", "HMI 变量"], [2, "", "conn", "连接"], [2, "", "mail", "HMI 报警"], [2, "", "recipe", "配方"], [2, "", "logs", "记录"],
  [2, "r", "script", "脚本"], [2, "", "sched", "计划任务"], [2, "", "cycle", "周期"], [2, "r", "report", "报表"], [2, "", "textList", "文本和图形列表"],
];
const INDENT = ["pl-1", "pl-[22px]", "pl-10", "pl-[58px]"];
const ROWBG = ["bg-[#f0f0f0]", "bg-[#e0e0e0]", "bg-[#e0e0e0] font-semibold", "bg-[#d8dee3] outline-1 -outline-offset-1 outline-dashed outline-[#888]"];

function ProjectTree() {
  return (
    <aside className="flex w-[283px] shrink-0 flex-col bg-[#ebebeb] text-xs text-black">
      <div className="flex h-6 items-center justify-between bg-[#b1b1b1] pr-2 pl-1.5 text-[15px] font-semibold text-white">
        项目树
        <svg viewBox="0 0 28 12" aria-hidden="true" className="h-3 w-7"><path d="M.5 1h3v10h-3z" fill="none" stroke="#fff" /><path d="M5.500 1v10M8 1v10M10 1v10" stroke="#ddd" /><path d="M27 0v12l-7-6z" fill="#fff" /></svg>
      </div>
      <div className="h-[3px] bg-[#eee]" />
      <div className="flex h-[25px] items-end gap-px border-b border-[#777] bg-[#ccc] pl-1.5 text-[15px] font-bold">
        <button type="button" className="-mb-px h-[22px] w-16 border border-b-0 border-[#777] bg-[#ececec] pl-[11px] text-left">设备</button>
        <button type="button" className="h-[21px] w-24 border border-b-0 border-[#777] bg-[#d4d4d4] pl-[11px] text-left text-[#555]">工厂对象</button>
      </div>
      <div className="flex h-[27px] items-center pr-2.5 pl-2">
        <Ic n="panel" />
        <span className="mr-1 ml-auto h-[22px] border-l border-dotted border-[#888]" />
        <button type="button" aria-label="list view" className="mr-1 flex size-[22px] items-center justify-center rounded-[2px] border border-[#3063d4] bg-[#eaf1fb]"><Ic n="columns" c="size-3.5" /></button>
        <Ic n="export" />
      </div>
      <div className="h-[21px] bg-[#c3c3c3]" />
      <div className="flex h-[603px] overflow-hidden">
        <ul className="min-w-0 flex-1">
          {TREE.map(([lv, ar, ic, name, kind = 0]) => (
            <li key={name} className={"flex h-[19px] items-center border-b border-white " + INDENT[lv] + " " + ROWBG[kind]}>
              <span className="mr-[5px] flex w-2.5 justify-center">
                {ar && <svg viewBox="0 0 8 8" aria-hidden="true" className="size-2"><path d={ar === "d" ? "M0 2h8L4 7z" : "M2 0v8l5-4z"} /></svg>}
              </span>
              <Ic n={ic} />
              <span className="ml-1 leading-[18px] whitespace-nowrap">{name}</span>
              <span className="ml-auto h-full w-5 border-l border-[#d5d5d5]" />
            </li>
          ))}
        </ul>
        <Scroll thumb="h-[212px]" />
      </div>
      <div className="h-[3px] bg-[#1d2232]" />
      <div className="flex h-[21px] border-b border-[#777] bg-gradient-to-b from-[#eee] to-[#d4d4d4] text-[15px] leading-5 font-bold">
        <span className="mr-1 flex w-5 items-center justify-center border-r border-[#777]"><svg viewBox="0 0 10 6" className="h-1.5 w-2.5"><path d="M1 1l4 4 4-4" fill="none" stroke="#000" strokeWidth="2" /></svg></span>
        详细视图
      </div>
      <div className="h-[25px] border-b border-[#888] bg-[#ccc]" />
      <div className="h-[27px]" />
      <table className="w-full table-fixed border-collapse">
        <thead>
          <tr className="h-[19px] border-y border-[#aaa] bg-gradient-to-b from-[#dedede] to-[#c6c6c6]">
            <th className="w-[18px] p-0" /><th className="w-40 border-x border-[#aaa] p-0 pl-1 text-left leading-4 font-normal">名称</th><th className="p-0" />
          </tr>
        </thead>
        <tbody>{Array.from({ length: 7 }, (_, i) => <tr key={i} className="h-[19px] border-b border-white bg-[#f0f0f0]"><td colSpan={3} className="p-0" /></tr>)}</tbody>
      </table>
      <div className="flex-1 bg-[#f0f0f0]" />
    </aside>
  );
}

function MainBar() {
  return (
    <header className="flex h-[52px] justify-between border-b border-[#1d2232] bg-[#ccc] pr-6 text-black">
      <div className="min-w-0 pt-[5px]">
        <nav className="flex h-5 items-center gap-[17px] pl-[11px] text-xs">
          {["项目(P)", "编辑(E)", "视图(V)", "插入(I)", "在线(O)", "选项(N)", "工具(T)", "窗口(W)", "帮助(H)"].map((m) => <button key={m} type="button" className="whitespace-nowrap">{m}</button>)}
        </nav>
        <div className="flex h-[26px] items-center gap-2 pl-3 text-[13px] whitespace-nowrap">
          <Tool n="new" /><Tool n="open" />
          <button type="button" className="flex items-center gap-1"><Ic n="save" />保存项目</button><Sep />
          <Tool n="print" /><Sep /><Tool n="cut" /><Tool n="copy" /><Tool n="paste" /><Tool n="del" /><Sep />
          <Tool n="undo" drop /><Tool n="redo" drop gray /><Sep /><Tool n="compile" /><Sep />
          <Tool n="load" /><Tool n="down" /><Tool n="up" /><Tool n="pc" /><Tool n="rt" /><Sep />
          <button type="button" className="flex items-center gap-1.5"><Ic n="plug" />转至在线</button>
          <button type="button" className="flex items-center gap-1.5 text-[#888]"><Ic n="unplug" />转至离线</button><Sep />
          <Tool n="help" /><Tool n="run" /><Tool n="stop" /><Sep /><Tool n="cross" /><Sep /><Tool n="splitH" /><Tool n="splitV" /><Sep />
          <Tool n="userOk" /><Tool n="userNo" />
          <input aria-label="project search" placeholder="<在项目中搜索>" className="mr-1 h-[18px] w-[120px] border border-[#888] bg-white px-1 text-xs placeholder:text-[#888]" />
          <Tool n="find" />
        </div>
      </div>
      <div className="flex flex-col items-end pt-3.5 font-bold">
        <div className="pr-6 text-sm leading-4 font-medium">Totally Integrated Automation</div>
        <div className="text-base leading-[15px] text-[#666]">PORTAL</div>
      </div>
    </header>
  );
}

const DOCS = [["overview", "总览"], ["screen", "画面_1"], ["logs", "日志"], ["users", "用户与角色"], ["globe", "项目语言"], ["screen", "根画面"]];

function PortalBar() {
  return (
    <div className="flex h-[30px] items-center gap-[3px] bg-[#1c1c1c] text-[13px]">
      <button type="button" className="flex w-[178px] items-center gap-2.5 pl-9 text-[15px] font-bold text-white">
        <svg viewBox="0 0 7 12" className="h-3 w-[7px]"><path d="M7 0v12L0 6z" fill="#fff" /></svg>Portal 视图
      </button>
      {DOCS.map(([ic, n], i) => (
        <button key={n} type="button" className={"flex h-5 w-[113px] items-center gap-1.5 px-[3px] text-black " + (i === 5 ? "bg-white font-bold" : "bg-[#c4c4c4]")}><Ic n={ic} />{n}</button>
      ))}
      <span className="ml-auto flex size-5 items-center justify-center bg-[#cfd3da]"><svg viewBox="0 0 16 16" className="size-4"><path d="M1 1h7v8H1zM1 12h14v3H1z" fill="#fff" stroke="#1d2d66" strokeWidth="1.300" /><path d="M10 4h3v6" fill="none" stroke="#1d2d66" strokeWidth="2" /></svg></span>
      <div className="flex h-full w-[345px] items-center gap-1.5 border-l border-[#666] pl-1.5 text-white">
        <Ic n="infoBlue" c="size-[15px]" />未连接 Teamcenter。
        <svg viewBox="0 0 16 16" className="mr-5 ml-auto size-4"><path d="M2 1l6 5 2-5 5 4c1 6-4 9-10 8l-4 3 2-6z" fill="#999" /><path d="M5 11l7-7" stroke="#222" /></svg>
      </div>
    </div>
  );
}

const APPS = [
  <><path d="M1 3h6l2 2h7v10H1z" fill="#f7c948" /><path d="M4 15V9h9v6h-3v-3H7v3z" fill="#3d8be0" /></>,
  <><circle cx="8" cy="8" r="8" fill="#e24434" /><path d="M8 8L1 4a8 8 0 006 12z" fill="#34a853" /><path d="M8 8h8a8 8 0 01-9 8z" fill="#fbbc05" /><circle cx="8" cy="8" r="3.500" fill="#4285f4" stroke="#fff" /></>,
  <><circle cx="8" cy="8" r="8" fill="#1382d3" /><path d="M2 10c-1-8 12-10 14-2 0 4-6 4-6 2 1-3-3-5-8 0z" fill="#45d2a0" /></>,
  <><path d="M2 2h12v12H2z" fill="#2d76dc" /><path d="M4 5h8M4 8h8M4 11h5" stroke="#fff" strokeWidth="1.500" /></>,
  <><circle cx="9" cy="6" r="5" fill="none" stroke="#f09025" strokeWidth="2.500" /><path d="M5 10l-4 5" stroke="#f09025" strokeWidth="3" /></>,
  <><path d="M2 1h12v14H2z" fill="#35b8c2" /><path d="M4 12l4-8 4 8M5 9h6" fill="none" stroke="#fff" strokeWidth="1.500" /></>,
  <><circle cx="8" cy="8" r="7" fill="#5c84e0" /><path d="M4 8h8M8 4v8" stroke="#fff" strokeWidth="2" /></>,
  <><path d="M1 3h14v10H1z" fill="#e9eef0" /><path d="M3 6h10v5H3z" fill="#3aa85a" /></>,
  <><circle cx="8" cy="8" r="7" fill="#259bea" /><path d="M5 5l6 6M8 3v5h5" stroke="#fff" strokeWidth="2" fill="none" /></>,
  <path d="M0 3l4 10 4-7 4 7 4-10" fill="none" stroke="#e23b33" strokeWidth="3" />,
  <><ellipse cx="7" cy="9" rx="7" ry="6" fill="#dfe9ee" /><circle cx="5" cy="7" r="1.500" fill="#e44" /><circle cx="9" cy="8" r="1.500" fill="#3a3" /><circle cx="6" cy="11" r="1.500" fill="#38d" /><path d="M14 1v14" stroke="#e08c2a" strokeWidth="2.500" /></>,
  <><ellipse cx="8" cy="6" rx="7" ry="5" fill="#f6e4e4" stroke="#d33" strokeWidth="1.500" /><path d="M8 7l4 7M12 8l-3 7" stroke="#2a7fd0" strokeWidth="2" /></>,
];
const TRAY = [
  <path d="M2 11l6-6 6 6" />, <path d="M1 5h14M1 11h14M5 2v6M11 8v6" strokeWidth="2" />, <path d="M2 14V3M14 14V5M5 14V7l3 4 3-4v7" strokeWidth="2" />,
  <path d="M5 6h10v6H5zM7 8h6v2H7zM1 2v3h4V2M3 5v7" strokeWidth="1.500" />, <path d="M3 14a12 12 0 0112-11M7 14a8 8 0 018-7M11 14a4 4 0 014-3" />,
  <path d="M1 6h3l4-4v12l-4-4H1zM10 5a4 4 0 010 6M12 3a7 7 0 010 10" />, <path d="M2 14c4 2 5-2 7-6s4-7 5-4-6 8-9 8-4-3-1-3 7 3 10-1" />,
];

function Taskbar() {
  return (
    <div className="flex h-[30px] items-center bg-gradient-to-r from-[#24343c] via-[#25383f] to-[#1f2b47]">
      <button type="button" aria-label="start" className="flex w-9 justify-center"><svg viewBox="0 0 16 16" className="size-4"><path d="M0 2l7-1v6.500H0zM8 1l8-1v7.500H8zM0 8.500h7V15l-7-1zM8 8.500h8V16l-8-1z" fill="#fff" /></svg></button>
      <label className="flex h-[29px] w-[258px] items-center gap-2.5 bg-[#f2f2f2] pl-3 text-sm text-[#444]">
        <svg viewBox="0 0 16 16" className="size-4"><circle cx="10" cy="6" r="5" fill="none" stroke="#222" strokeWidth="1.300" /><path d="M6 10l-5 5" stroke="#222" strokeWidth="1.300" /></svg>
        <input aria-label="search" placeholder="搜索" className="w-full min-w-0 placeholder:text-[#555]" />
        <svg viewBox="0 0 46 28" aria-hidden="true" className="mr-1.5 h-7 w-[46px] shrink-0"><path d="M24 4c6-6 10-2 12 4 8 4 10 14 9 20H18c4-8 8-14 10-18z" fill="#43335a" /><path d="M28 8l-16 7 14-3z" fill="#e8593c" /><path d="M4 17c4-5 9-3 10 0l-1 11H0c0-4 1-8 4-11z" fill="#d8dde6" /><path d="M5 14l7-2 3 5-3 11h-3z" fill="#584a76" /></svg>
      </label>
      <div className="ml-[3px] flex h-full">
        {APPS.map((a, i) => (
          <button key={i} type="button" aria-label={"app " + (i + 1)} className={"flex w-[37px] items-center justify-center border-b-2 " + (i === 0 || i > 3 ? "border-[#6fb7ee]" : "border-transparent")}>
            <svg viewBox="0 0 16 16" className="size-4">{a}</svg>
          </button>
        ))}
      </div>
      <div className="ml-auto flex items-center gap-4 pr-5 text-[13px] text-white">
        {TRAY.map((a, i) => <svg key={i} viewBox="0 0 16 16" fill="none" stroke="#fff" strokeWidth="1.300" className="size-4 overflow-visible">{a}{i === 2 && <circle cx="14" cy="2" r="2.500" fill="#e8473b" stroke="none" />}</svg>)}
        <span className="-mx-1">中</span>
        <svg viewBox="0 0 16 16" className="size-4"><rect x="1" y="0" width="14" height="16" rx="2" fill="#fff" /><path d="M7 9l6-7" stroke="#111" strokeWidth="1.500" /><circle cx="7" cy="9" r="2" fill="#111" /><path d="M1 11l4 5H1z" fill="#111" /></svg>
        <span>17:27</span>
        <svg viewBox="0 0 16 16" className="mx-1 size-4"><path d="M0 1h16v12h-5l-3 3-3-3H0z" fill="#fff" /><path d="M3 5h10M3 8h10" stroke="#223" strokeWidth="1.300" /></svg>
      </div>
    </div>
  );
}

function Ring({ className, color = "border-[#ff7f27]" }) {
  return <div className={"pointer-events-none absolute border-[5px] " + color + " " + className} />;
}

export default function App() {
  return (
    <main className="grid min-h-screen grid-cols-[1611fr_289fr_1920fr_8fr] items-start overflow-hidden bg-white font-['Open_Sans','Noto_Sans_CJK_SC',sans-serif]">
      <div className="relative min-w-0">
        <div className="flex border-b-2 border-l-[3px] border-b-[#1c1c1c] border-l-[#1d2540]">
          <Editor id="left" t={ZH} />
          <div className="w-[3px] shrink-0 bg-[#1d2232]" />
          <TaskPanel id="left" lang="中文（中华人民共和国）" selected />
          <SideTabs w="w-[23px]" />
        </div>
        <div className="flex h-8 w-[9px] flex-col justify-between bg-gradient-to-b from-[#ccc] from-70% to-[#1c1c1c] to-75%">
          <span className="mt-1.5 h-3.5 border border-[#555] bg-gradient-to-r from-[#aebbe8] to-[#f4f6fd]" /><span className="h-1 bg-[#24404a]" />
        </div>
        <Ring className="top-[525px] left-[312px] h-[92px] w-[226px] rounded-[50%]" />
        <Ring className="top-[811px] left-[698px] h-[71px] w-[270px] rounded-[50%]" />
        <Ring className="top-[580px] right-[68px] h-[65px] w-[314px] rounded-[50%]" />
      </div>

      <div className="flex min-w-0 flex-col items-end">
        <div className="h-[3px] w-[195px] bg-[#1c1c1c]" />
        <svg viewBox="0 0 210 90" aria-label="arrow" className="mt-[495px] mr-5 h-[90px] w-[210px]">
          <path d="M3 26h111V4l89 42-89 40V67H3z" fill="#fff" stroke="#ed1c24" strokeWidth="5" />
        </svg>
      </div>

      <div className="relative min-w-0">
        <div className="mr-[229px] h-[3px] overflow-hidden bg-[#1c1c1c] text-sm leading-[0px] font-bold text-white">ua_s71500\opc_ua_s71500</div>
        <div className="mt-0.5 h-[7px] overflow-hidden bg-[#1c1c1c] pl-[60px] text-sm leading-[0px] font-bold whitespace-pre text-white">Siemens  -  D:\项目\opc_ua_s71500\opc_ua_s71500</div>
        <MainBar />
        <div className="flex">
          <div className="flex w-6 shrink-0 flex-col border-r border-[#1d2232] bg-[#b1b1b1] pt-6">
            <button type="button" className="flex h-[222px] items-center justify-center border-y border-white text-[15px] leading-5 font-bold text-white">
              <span className="rotate-180 [text-orientation:sideways] [writing-mode:vertical-rl]">可视化</span>
            </button>
          </div>
          <ProjectTree />
          <div className="w-[3px] shrink-0 bg-[#1d2232]" />
          <Editor id="right" t={EN} />
          <div className="w-[3px] shrink-0 bg-[#1d2232]" />
          <TaskPanel id="right" lang="英语（美国）" refText="切换plc到192.168.0.5" />
          <SideTabs w="w-[25px]" />
        </div>
        <PortalBar />
        <Taskbar />
        <Ring color="border-[#ed1c24]" className="top-[657px] right-[217px] h-[55px] w-[164px] rounded-[50%]" />
        <Ring color="border-[#ed1c24]" className="top-[717px] right-[156px] h-[79px] w-[253px]" />
        <Ring color="border-[#ed1c24]" className="top-[877px] right-[780px] h-[55px] w-[131px]" />
        <div className="pointer-events-none absolute top-[505px] -left-[180px] w-[400px] -rotate-[32deg] text-center leading-9 font-bold text-[#999]/15">
          <div className="text-4xl whitespace-nowrap">西门子工业　找答案</div>
          <div className="text-2xl">support.industry.siemens.com/cs</div>
        </div>
      </div>
      <div />
    </main>
  );
}
